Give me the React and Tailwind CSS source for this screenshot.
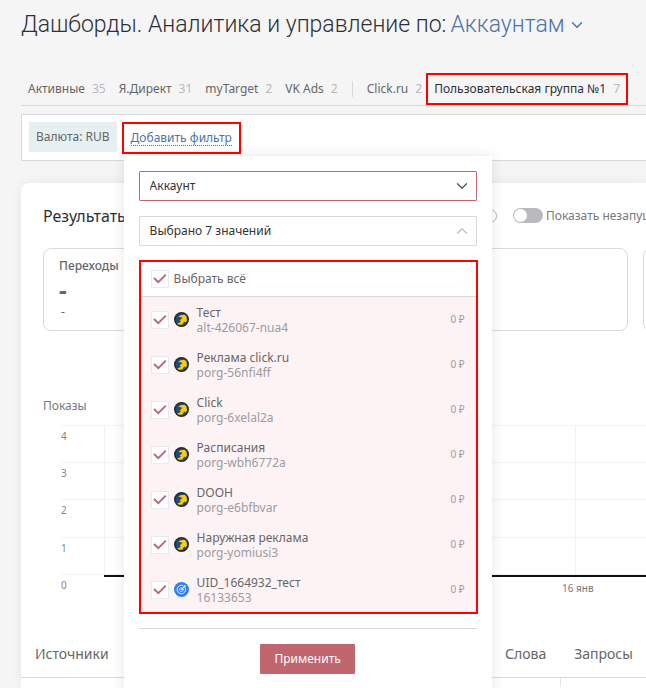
import React, { useState } from 'react';
import { ChevronDown, ChevronUp } from 'lucide-react';

const TABS = [
  { label: 'Активные', count: 35 },
  { label: 'Я.Директ', count: 31 },
  { label: 'myTarget', count: 2 },
  { label: 'VK Ads', count: 2 },
];

const ACCOUNTS = [
  { name: 'Тест', id: 'alt-426067-nua4', type: 'direct' },
  { name: 'Реклама click.ru', id: 'porg-56nfi4ff', type: 'direct' },
  { name: 'Click', id: 'porg-6xelal2a', type: 'direct' },
  { name: 'Расписания', id: 'porg-wbh6772a', type: 'direct' },
  { name: 'DOOH', id: 'porg-e6bfbvar', type: 'direct' },
  { name: 'Наружная реклама', id: 'porg-yomiusi3', type: 'direct' },
  { name: 'UID_1664932_тест', id: '16133653', type: 'target' },
];

const Y_AXIS = [
  { value: 4, y: 1 },
  { value: 3, y: 38 },
  { value: 2, y: 75 },
  { value: 1, y: 113 },
  { value: 0, y: 150 },
];

function DirectIcon() {
  return (
    <svg viewBox="0 0 15 15" className="size-[15px] shrink-0" aria-hidden="true">
      <circle cx="7.5" cy="7.5" r="7.5" fill="#24282d" />
      <circle cx="7.5" cy="7.5" r="6" fill="#1f4c7c" />
      <path d="M4.4 5 L6.4 3.2 L10.6 2.8 L12.4 4.4 L13 8.6 L11.4 10.4 L10.6 9.4 L8.8 11.2 L8.8 12.6 L4.8 12.8 L3.2 11.4 L5.4 10.8 L7 9.2 L5.6 8.6 L8.2 6.2 L7.4 5.2 Z" fill="#fc0" />
    </svg>
  );
}

function TargetIcon() {
  return (
    <svg viewBox="0 0 15 15" className="size-[15px] shrink-0" aria-hidden="true">
      <circle cx="7.5" cy="7.5" r="7.5" fill="#2d7ff9" />
      <g fill="none" stroke="#fff" strokeLinecap="round">
        <path d="M8.8 3.4 A4.3 4.3 0 1 0 11.6 6.4" strokeWidth="0.9" />
        <path d="M7.6 5.6 A2 2 0 1 0 9.4 7.4" strokeWidth="0.9" opacity="0.7" />
        <path d="M7.5 7.5 L10.4 4.6" strokeWidth="1.3" />
      </g>
      <path d="M9.6 4.2 L11 2.8 L11.2 3.8 L12.2 4 L10.8 5.4 L9.6 5.4 Z" fill="#fff" />
    </svg>
  );
}

function Check({ checked, onChange }) {
  return (
    <span className="relative flex size-[18px] shrink-0">
      <input
        type="checkbox"
        checked={checked}
        onChange={onChange}
        className="size-[18px] appearance-none border border-[#e6eced] bg-white"
      />
      {checked && (
        <svg viewBox="0 0 18 18" className="pointer-events-none absolute inset-0" aria-hidden="true">
          <path d="M3 8 L7.3 12.2 L14.8 4.6" fill="none" stroke="#b96b76" strokeWidth="2" />
        </svg>
      )}
    </span>
  );
}

function FilterPanel() {
  const [selected, setSelected] = useState(ACCOUNTS.map((a) => a.id));
  const all = selected.length === ACCOUNTS.length;

  const toggle = (id) =>
    setSelected((prev) => (prev.includes(id) ? prev.filter((x) => x !== id) : [...prev, id]));

  return (
    <div className="absolute top-[34px] left-[2px] z-10 w-[368px] bg-white px-[15px] pt-[15px] pb-8 shadow-[0_0_12px_rgba(0,0,0,0.1)]">
      <div className="relative">
        <select
          aria-label="Параметр фильтра"
          className="block h-[30px] w-full appearance-none rounded-[1px] border border-[#c0666e] bg-white px-[10px] text-xs text-[#333]"
        >
          <option>Аккаунт</option>
        </select>
        <ChevronDown size={18} strokeWidth={1.75} className="pointer-events-none absolute top-1.5 right-1.5 text-[#555]" />
      </div>

      <button
        type="button"
        className="mt-[15px] flex h-[30px] w-full items-center justify-between rounded-[1px] border border-[#d8d8e0] pr-[5px] pl-[10px] text-[#333]"
      >
        Выбрано {selected.length} значений
        <ChevronUp size={18} strokeWidth={1.5} className="text-[#b9b9be]" />
      </button>

      {/* Accounts */}
      <div className="mt-[14px] -mr-px border-2 border-[#f00]">
        <label className="flex h-[35px] items-center gap-[5px] border-b border-[#d8d8e0] pl-[10px]">
          <Check checked={all} onChange={() => setSelected(all ? [] : ACCOUNTS.map((a) => a.id))} />
          Выбрать всё
        </label>
        {ACCOUNTS.map((a) => (
          <label key={a.id} className="flex h-[45px] items-center bg-[#fdf3f4] pr-[11px] pl-[10px] leading-[15px]">
            <Check checked={selected.includes(a.id)} onChange={() => toggle(a.id)} />
            <span className="mr-2 ml-[5px] flex">{a.type === 'direct' ? <DirectIcon /> : <TargetIcon />}</span>
            <span className="flex flex-1 flex-col">
              <span>{a.name}</span>
              <span className="text-[#9b9ba1]">{a.id}</span>
            </span>
            <span className="text-[10px] text-[#9b9ba1]">0 ₽</span>
          </label>
        ))}
      </div>

      <div className="mt-[14px] flex justify-center border-t border-[#d8d8e0] pt-[15px]">
        <button type="button" className="h-[30px] rounded-[1px] bg-[#c0666e] px-[14px] text-white">
          Применить
        </button>
      </div>
    </div>
  );
}

function Chart() {
  return (
    <svg className="block h-[172px] w-full overflow-visible" role="img" aria-label="Показы">
      {Y_AXIS.map((t) => (
        <g key={t.value}>
          <line x1="18" x2="100%" y1={t.y - 0.5} y2={t.y - 0.5} stroke="#eff4f5" />
          <text x="18" y={t.y + 14} fontSize="10" fill="#85858a">{t.value}</text>
        </g>
      ))}
      <path d="M61.5 0 V150 M532.5 0 V155" stroke="#eff4f5" />
      <line x1="61" x2="100%" y1="151" y2="151" stroke="#111" strokeWidth="2" />
      <text x="519" y="167" fontSize="10" fill="#77777c">16 янв</text>
    </svg>
  );
}

export default function App() {
  return (
    <div className="flex min-h-screen flex-col overflow-hidden bg-[#f5f5f5] pl-[21px] font-['Noto_Sans',sans-serif] text-xs whitespace-nowrap text-[#666]">
      <h1 className="flex h-[50px] items-center font-['Roboto',sans-serif] text-[23px] font-light text-[#2d3038]">
        Дашборды. Аналитика и управление по:
        <button type="button" className="ml-1 flex items-center gap-[3px] text-[#4c73a8]">
          Аккаунтам
          <ChevronDown size={18} strokeWidth={2} />
        </button>
      </h1>

      {/* Account groups */}
      <nav className="mt-[23px] flex h-[33px] items-center border-b border-[#d8d8e0] pl-[7px]">
        <div className="flex gap-[13px]">
          {TABS.map((t) => (
            <button type="button" key={t.label} className="flex gap-[7px]">
              {t.label}
              <span className="text-[#b9b9be]">{t.count}</span>
            </button>
          ))}
        </div>
        <span className="mx-[14px] h-4 w-px bg-[#d8d8e0]" />
        <button type="button" className="flex gap-[7px]">
          Click.ru
          <span className="text-[#b9b9be]">2</span>
        </button>
        <button type="button" className="ml-1 flex h-8 items-center gap-[7px] border-2 border-[#f00] px-1.5 text-[#2d3038]">
          Пользовательская группа №1
          <span className="text-[#b9b9be]">7</span>
        </button>
      </nav>

      {/* Filters */}
      <div className="mt-2 flex h-[47px] items-start border border-r-0 border-[#d8d8e0] bg-white py-[7px] pl-[7px]">
        <span className="flex h-[30px] items-center bg-[#e6eff1] px-[7px]">Валюта: RUB</span>
        <div className="relative ml-[5px]">
          <button type="button" className="flex h-8 items-center border-2 border-[#f00] px-[7px] text-[#4c73a8]">
            <span className="border-b border-dotted border-[#4c73a8] leading-[15px]">Добавить фильтр</span>
          </button>
          <FilterPanel />
        </div>
      </div>

      <main className="mt-[22px] flex-1 rounded-tl-lg bg-white shadow-[0_0_12px_rgba(0,0,0,0.06)]">
        <div className="flex h-[65px] items-center pl-[22px]">
          <h2 className="w-[440px] shrink-0 text-base text-[#2d3038]">Результаты</h2>
          <span className="flex size-[14px] shrink-0 items-center justify-center rounded-full border border-[#b9b9be] text-[10px] text-[#b9b9be]">?</span>
          <label className="ml-4 flex shrink-0 items-center gap-[3px] text-[#77777c]">
            <span className="relative flex h-[15px] w-[30px]">
              <input type="checkbox" className="peer h-[15px] w-[30px] appearance-none rounded-full bg-[#b9b9be]" />
              <span className="pointer-events-none absolute top-px left-px size-[13px] rounded-full bg-white peer-checked:left-4" />
            </span>
            Показать незапущенные
          </label>
        </div>

        <div className="flex gap-[15px] pl-[22px]">
          <div className="h-[83px] w-[585px] shrink-0 rounded-lg border border-[#d8dce0] px-[15px] pt-[9px]">
            <div className="leading-4 font-medium">Переходы</div>
            <div className="mt-[6px] text-2xl leading-5 font-bold">-</div>
            <div className="mt-1 ml-[2px] leading-4">-</div>
          </div>
          <div className="h-[83px] w-[585px] shrink-0 rounded-lg border border-[#d8dce0]" />
        </div>

        <div className="pt-[67px] pl-[22px]">
          <h3 className="mb-[11px] leading-4 text-[#77777c]">Показы</h3>
          <Chart />
        </div>

        <div className="mt-[33px] flex h-12 items-center border-b border-[#d8d8e0] pl-[14px] text-sm">
          <button type="button" className="w-[470px] shrink-0 text-left">Источники</button>
          <button type="button" className="mr-7 shrink-0">Слова</button>
          <button type="button" className="shrink-0">Запросы</button>
        </div>
        <div className="h-[9px] w-[540px] border-r border-[#e0eaec]" />
      </main>
    </div>
  );
}
